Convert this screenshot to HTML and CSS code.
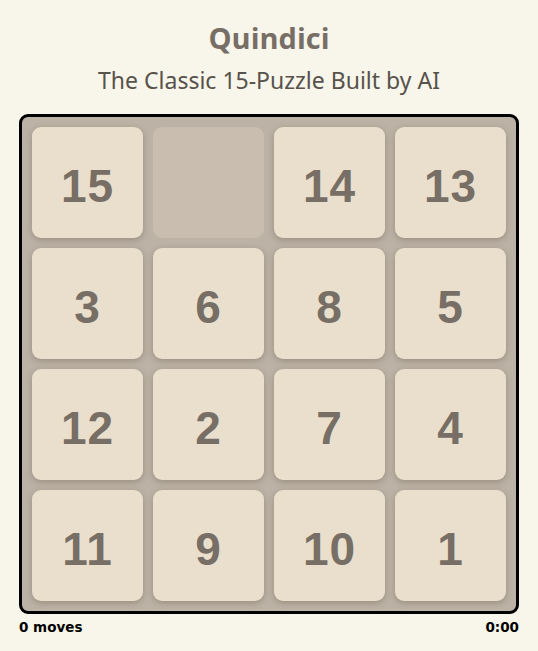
FILE: index.html
```html
<!DOCTYPE html>
<html>
<head>
<meta charset="utf-8">
<link rel="stylesheet" href="styles.css">
</head>
<body>
<div class="page">
  <h1 class="title">Quindici</h1>
  <p class="subtitle">The Classic 15-Puzzle Built by AI</p>
  <div class="board">
    <div class="tile">15</div>
    <div class="tile empty"></div>
    <div class="tile">14</div>
    <div class="tile">13</div>
    <div class="tile">3</div>
    <div class="tile">6</div>
    <div class="tile">8</div>
    <div class="tile">5</div>
    <div class="tile">12</div>
    <div class="tile">2</div>
    <div class="tile">7</div>
    <div class="tile">4</div>
    <div class="tile">11</div>
    <div class="tile">9</div>
    <div class="tile">10</div>
    <div class="tile">1</div>
  </div>
  <div class="status">
    <span>0 moves</span>
    <span>0:00</span>
  </div>
</div>
</body>
</html>
```
FILE: styles.css
```css
html, body {
  margin: 0;
  padding: 0;
  background: #f8f6ea;
}
.page {
  width: 500px;
  margin: 0 auto;
  padding-top: 18px;
  display: flex;
  flex-direction: column;
  align-items: stretch;
}
.title {
  margin: 0;
  text-align: center;
  font-family: "Open Sans", sans-serif;
  font-weight: 700;
  font-size: 29px;
  line-height: 40px;
  color: #776e65;
}
.subtitle {
  margin: 7px 0 0;
  text-align: center;
  font-family: "Noto Sans", sans-serif;
  font-weight: 400;
  font-size: 23px;
  line-height: 30px;
  color: #57524b;
}
.board {
  margin-top: 19px;
  border: 3px solid #000;
  border-radius: 9px;
  background: #bcb2a5;
  padding: 10px;
  display: grid;
  grid-template-columns: repeat(4, 111px);
  grid-auto-rows: 111px;
  gap: 10px;
}
.tile {
  background: #e9dfcc;
  border-radius: 9px;
  box-shadow: 0 2px 6px rgba(90, 75, 60, 0.35);
  display: flex;
  align-items: center;
  justify-content: center;
  padding-top: 7px;
  box-sizing: border-box;
  font-family: "Liberation Sans", Arial, sans-serif;
  font-weight: 700;
  font-size: 46px;
  letter-spacing: 1px;
  color: #776e65;
}
.tile.empty {
  background: #c9bdb0;
  box-shadow: none;
}
.status {
  display: flex;
  justify-content: space-between;
  margin-top: 4px;
  font-family: "DejaVu Sans", sans-serif;
  font-weight: 700;
  font-size: 13.5px;
  line-height: 18px;
  color: #000;
}
```
